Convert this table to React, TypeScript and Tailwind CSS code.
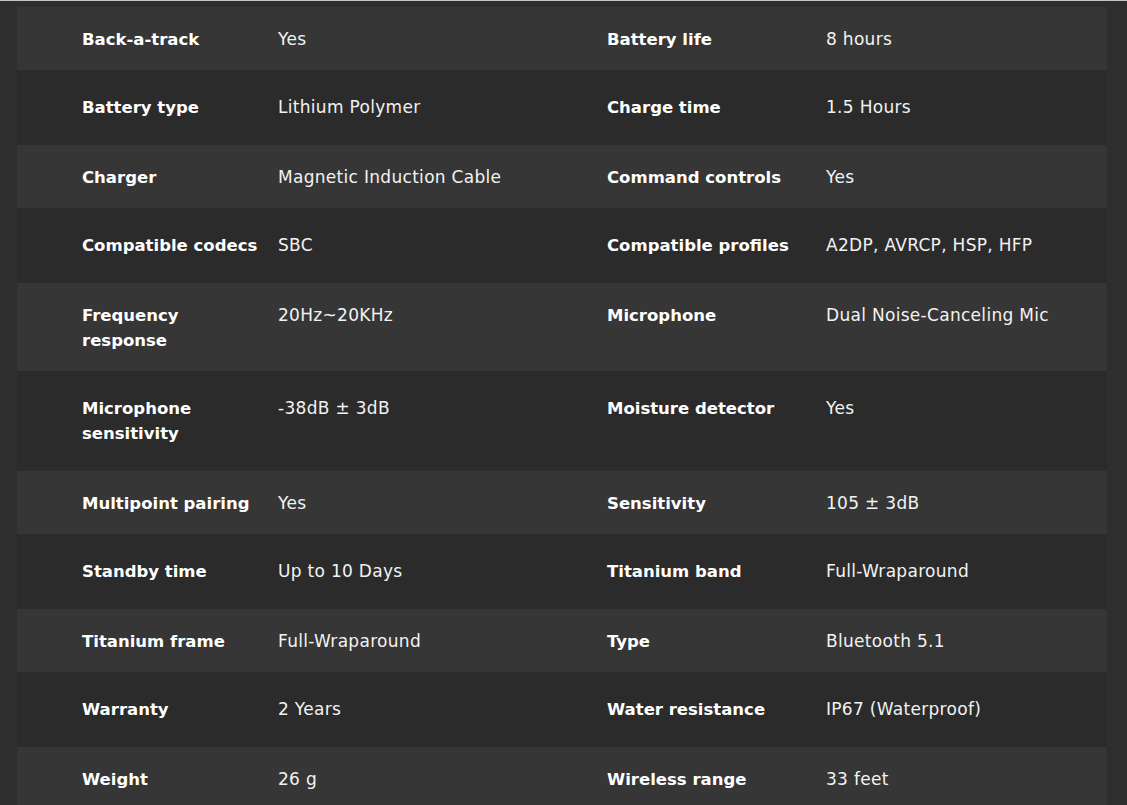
const specs: [string, string, string, string][] = [
  ["Back-a-track", "Yes", "Battery life", "8 hours"],
  ["Battery type", "Lithium Polymer", "Charge time", "1.5 Hours"],
  ["Charger", "Magnetic Induction Cable", "Command controls", "Yes"],
  ["Compatible codecs", "SBC", "Compatible profiles", "A2DP, AVRCP, HSP, HFP"],
  ["Frequency response", "20Hz~20KHz", "Microphone", "Dual Noise-Canceling Mic"],
  ["Microphone sensitivity", "-38dB ± 3dB", "Moisture detector", "Yes"],
  ["Multipoint pairing", "Yes", "Sensitivity", "105 ± 3dB"],
  ["Standby time", "Up to 10 Days", "Titanium band", "Full-Wraparound"],
  ["Titanium frame", "Full-Wraparound", "Type", "Bluetooth 5.1"],
  ["Warranty", "2 Years", "Water resistance", "IP67 (Waterproof)"],
  ["Weight", "26 g", "Wireless range", "33 feet"],
];

export default function App() {
  return (
    <div
      className="min-h-screen bg-[#2e2e2e] border-t border-[#c4c4c4] pt-[6px] leading-[25px] text-[#f2f2f2]"
      style={{ fontFamily: '"DejaVu Sans", "Liberation Sans", sans-serif' }}
    >
      <div className="ml-[17px] w-[1090px] bg-[#2b2b2b]">
        {specs.map((row, i) => (
          <div
            key={row[0]}
            className={
              i % 2 === 0
                ? "grid grid-cols-[196px_329px_219px_1fr] pl-[65px] pt-[20px] pb-[18px] bg-[#363636]"
                : "grid grid-cols-[196px_329px_219px_1fr] pl-[65px] pt-[25px] pb-[25px]"
            }
          >
            <div className="font-bold text-white text-[16.5px] pr-[16px]">{row[0]}</div>
            <div className="text-[17px] tracking-[0.3px]">{row[1]}</div>
            <div className="font-bold text-white text-[16.5px]">{row[2]}</div>
            <div className="text-[17px] tracking-[0.3px]">{row[3]}</div>
          </div>
        ))}
      </div>
    </div>
  );
}
